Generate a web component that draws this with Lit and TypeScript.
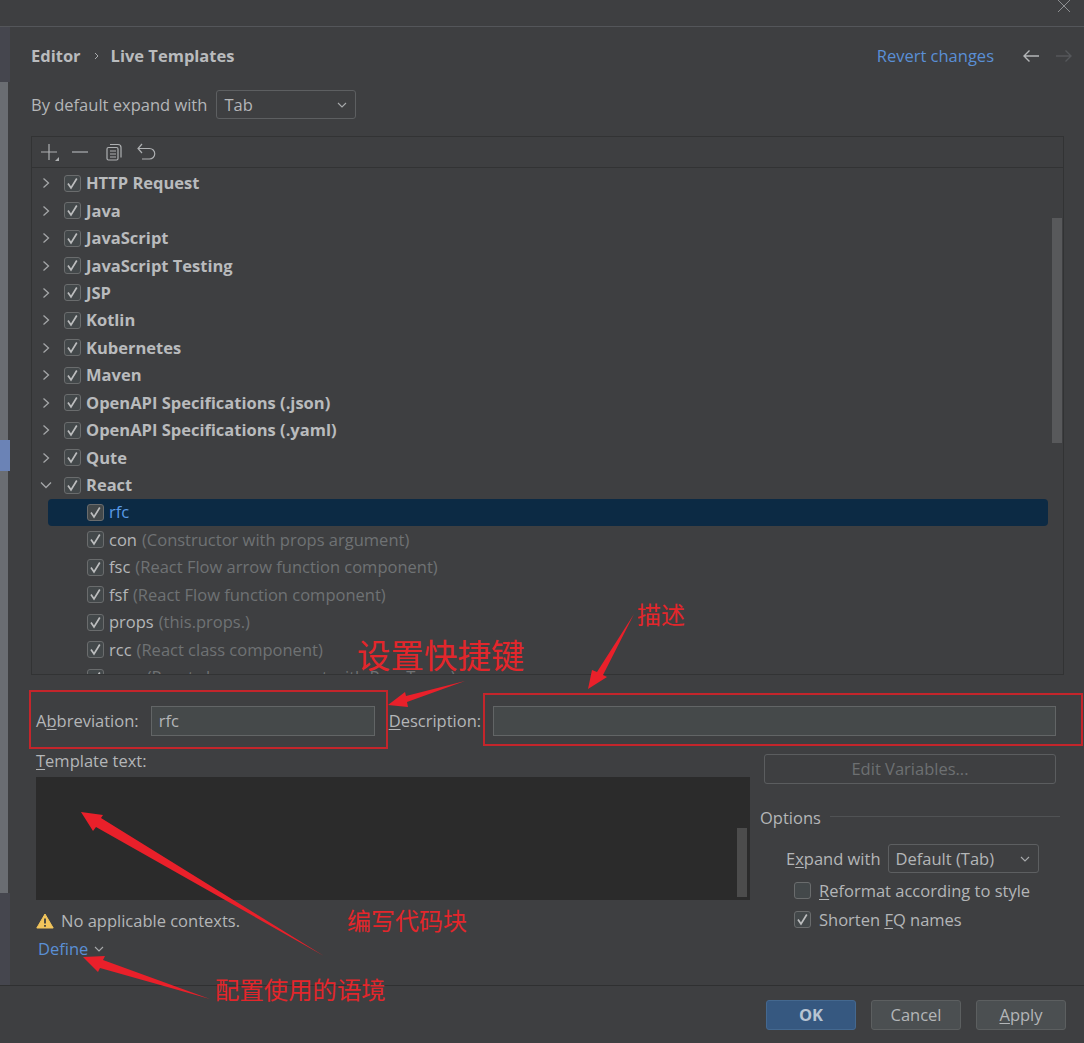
import { LitElement, html, css, svg } from "lit";
import { customElement } from "lit/decorators.js";

const groups = ["HTTP Request","Java","JavaScript","JavaScript Testing","JSP","Kotlin","Kubernetes","Maven","OpenAPI Specifications (.json)","OpenAPI Specifications (.yaml)","Qute"];
const children: [string,string][] = [
  ["con","(Constructor with props argument)"],
  ["fsc","(React Flow arrow function component)"],
  ["fsf","(React Flow function component)"],
  ["props","(this.props.)"],
  ["rcc","(React class component)"],
  ["rccp","(React class component with PropTypes)"],
];

const chevRight = html`<svg class="chev" viewBox="0 0 10 12"><path d="M2.5 1.5 L7.5 6 L2.5 10.5"/></svg>`;
const check = html`<svg viewBox="0 0 15 15"><path d="M3 7.5 L6 12 L11.8 2.5"/></svg>`;
const cb = (on = true) => html`<span class="cb">${on ? check : ""}</span>`;
const small = html`<svg class="sm" viewBox="0 0 10 6"><path d="M1 1 L5 5 L9 1"/></svg>`;

@customElement("app-root")
export class AppRoot extends LitElement {
  static styles = css`
    :host { display: block; width: 1084px; height: 1043px; position: relative; overflow: hidden;
      background: #3e3f41; color: #b4b6b8; font: 16.5px/22px "Open Sans", "Noto Sans", sans-serif; }
    * { box-sizing: border-box; }
    u { text-underline-offset: 2px; text-decoration-thickness: 1px; }
    .page { display: flex; flex-direction: column; height: 100%; }
    .title { height: 27px; flex: none; border-bottom: 1px solid #54565a; display: flex; justify-content: flex-end; padding-right: 13px; }
    .title svg { width: 14px; height: 13px; stroke: #8d8f91; stroke-width: 1; fill: none; }
    .body { flex: 1; display: flex; min-height: 0; }
    .strip { width: 10px; flex: none; display: flex; flex-direction: column; }
    .s1 { height: 55px; width: 10px; background: #45464e; }
    .s2 { height: 358px; width: 8px; background: #6a6d72; }
    .s3 { height: 31px; width: 10px; background: #6b83b6; }
    .s4 { height: 422px; width: 8px; background: #6a6d72; }
    .s5 { flex: 1; width: 10px; background: #45464e; }
    .main { flex: 1; min-width: 0; padding: 0 20px 0 21px; display: flex; flex-direction: column; }
    .head { height: 58px; flex: none; display: flex; align-items: center; }
    .crumb { font-weight: 700; color: #b9bbbd; display: flex; align-items: center; }
    .crumb svg { width: 6px; height: 10px; margin: 0 11px 0 13px; fill: none; stroke: #a8aaac; stroke-width: 1; }
    .revert { margin-left: auto; color: #5a8fd6; }
    .nav { display: flex; gap: 15px; margin-left: 28px; margin-right: -9px; }
    .nav svg { width: 18px; height: 14px; fill: none; stroke: #b4b6b8; stroke-width: 1.4; }
    .nav svg.off { stroke: #55575a; }
    .expand { margin-top: 5px; height: 29px; flex: none; display: flex; align-items: center; gap: 9px; }
    .select { height: 29px; border: 1px solid #5d5f61; border-radius: 3px; display: flex; align-items: center; padding: 0 8px 0 7px; justify-content: space-between; }
    .sm { width: 10px; height: 6px; fill: none; stroke: #a8aaac; stroke-width: 1.1; }
    .select.tab { width: 140px; }
    .tree { margin-top: 17px; width: 1033px; height: 539px; flex: none; border: 1px solid #323334; position: relative; overflow: hidden; }
    .tools { height: 31px; margin-bottom: 1.5px; border-bottom: 1px solid #323334; display: flex; align-items: center; }
    .tools svg { position: absolute; top: 4px; left: 7px; width: 120px; height: 20px; fill: none; stroke: #aeb0b2; stroke-width: 1.2; }
    .row { height: 27.45px; display: flex; align-items: center; font-weight: 700; color: #b9bbbd; padding-left: 9px; }
    .chev { width: 10px; height: 12px; fill: none; stroke: #a4a6a8; stroke-width: 1.3; margin-right: 13px; flex: none; }
    .row .chev.dn { width: 12px; height: 10px; margin-left: -1px; margin-right: 12px; }
    .cb { width: 17px; height: 17px; flex: none; border: 1px solid #6a6c6d; border-radius: 3px; background: #43484a; display: inline-flex; }
    .cb svg { width: 15px; height: 15px; fill: none; stroke: #bcbdbe; stroke-width: 1.7; }
    .row .name { margin-left: 5px; }
    .child { font-weight: 400; margin: 0 15px 0 16px; padding-left: 39px; color: #b4b6b8; border-radius: 4px; }
    .child .desc { color: #6f7274; margin-left: 5px; }
    .child.sel { background: #0c2a44; }
    .child.sel .name { color: #5a9be6; }
    .thumb { position: absolute; left: 1020px; top: 81px; width: 10px; height: 225px; background: #58595b; }
    .fields { height: 30px; margin-top: 31px; flex: none; display: flex; align-items: center; padding-left: 5px; }
    .input { height: 30px; background: #45494a; border: 1px solid #626566; padding: 0 7px; display: flex; align-items: center; }
    .i1 { width: 224px; margin: 0 14px 0 12px; }
    .i2 { width: 563px; margin-left: 12px; }
    .lower { flex: 1; display: grid; grid-template-columns: 728px 1fr; min-height: 0; }
    .left { padding: 14px 0 0 5px; display: flex; flex-direction: column; }
    .lbl { height: 22px; line-height: 22px; }
    .editor { width: 714px; height: 123px; margin-top: 5px; background: #2b2b2b; position: relative; flex: none; }
    .editor i { position: absolute; left: 701px; top: 51px; width: 10px; height: 69px; background: #4c4c4c; }
    .warn { display: flex; align-items: center; gap: 7px; margin-top: 10px; height: 22px; }
    .warn svg { width: 18px; height: 16px; flex: none; }
    .define { margin: 6px 0 0 2px; height: 22px; color: #5a8fd6; display: flex; align-items: center; gap: 6px; }
    .right { padding-top: 18px; display: flex; flex-direction: column; }
    .btn { height: 30px; border: 1px solid #5b5d5f; border-radius: 3px; display: flex; align-items: center; justify-content: center; }
    .edit { width: 292px; margin-left: 5px; color: #6d7072; }
    .opt { margin: 23px 0 0 1px; width: 300px; display: flex; align-items: center; gap: 9px; height: 22px; }
    .opt b { font-weight: 400; }
    .opt i { flex: 1; height: 1px; background: #505254; margin-top: -3px; }
    .ew { margin: 15px 0 0 27px; display: flex; align-items: center; gap: 7px; height: 29px; }
    .ew .select { width: 151px; }
    .chk { margin: 8px 0 0 35px; display: flex; align-items: center; gap: 8px; height: 19px; }
    .chk + .chk { margin-top: 10px; }
    .foot { height: 58px; flex: none; border-top: 1px solid #2f3031; display: flex; justify-content: flex-end; padding: 14px 18px 0 0; gap: 15px; }
    .foot .btn { width: 90px; background: #4b4f51; border-color: #5c5f60; color: #b4b6b8; }
    .foot .ok { background: #365880; border-color: #44688f; font-weight: 700; color: #b7c4d2; }
    .box { position: absolute; border: 2px solid #c4252b; }
    .b1 { left: 29px; top: 690px; width: 359px; height: 59px; }
    .b2 { left: 483px; top: 693px; width: 600px; height: 53px; }
    .note { position: absolute; color: #e3262b; font-family: "Noto Sans CJK SC", sans-serif; font-size: 24px; line-height: 32px; white-space: nowrap; }
    .n1 { left: 357px; top: 632px; font-size: 33.5px; line-height: 44px; }
    .n2 { left: 637px; top: 598px; }
    .n3 { left: 347px; top: 904px; }
    .n4 { left: 215px; top: 973px; font-size: 24.4px; }
    .arrows { position: absolute; inset: 0; width: 1084px; height: 1043px; fill: #e9202a; pointer-events: none; }
  `;

  render() {
    return html`<div class="page">
      <div class="title"><svg viewBox="0 0 14 13"><path d="M1 0 L13 12 M13 0 L1 12"/></svg></div>
      <div class="body">
        <div class="strip"><div class="s1"></div><div class="s2"></div><div class="s3"></div><div class="s4"></div><div class="s5"></div></div>
        <div class="main">
          <div class="head">
            <div class="crumb">Editor<svg viewBox="0 0 6 10"><path d="M1 2 L4 5 L1 8"/></svg>Live Templates</div>
            <span class="revert">Revert changes</span>
            <div class="nav">
              <svg viewBox="0 0 18 14"><path d="M17 7 H2 M7.5 1.5 L2 7 L7.5 12.5"/></svg>
              <svg class="off" viewBox="0 0 18 14"><path d="M1 7 H16 M10.5 1.5 L16 7 L10.5 12.5"/></svg>
            </div>
          </div>
          <div class="expand"><span>By default expand with</span><div class="select tab"><span>Tab</span>${small}</div></div>
          <div class="tree">
            <div class="tools"><svg viewBox="0 0 120 20">
              <path d="M2 11 H18 M10 3 V19"/><path d="M20 20 h-4 l4 -4 z" fill="#aeb0b2" stroke="none"/>
              <path d="M33 11 H49"/>
              <path d="M68 8 a1.5 1.5 0 0 1 1.5 -1.5 h8 a1.5 1.5 0 0 1 1.5 1.5 v9.5 a1.5 1.5 0 0 1 -1.5 1.5 h-8 a1.5 1.5 0 0 1 -1.5 -1.5 z M71 3.5 h8 a3 3 0 0 1 3 3 v10 M71 10 h6 M71 13 h6 M71 16 h6"/>
              <path d="M103 3 L99 7.5 L103 12 M99 7.5 H110.5 a5 5 0 0 1 0 10.5 H103"/>
            </svg></div>
            ${groups.map((g) => html`<div class="row">${chevRight}${cb()}<span class="name">${g}</span></div>`)}
            <div class="row"><svg class="chev dn" viewBox="0 0 12 10"><path d="M1 2.5 L6 7.5 L11 2.5"/></svg>${cb()}<span class="name">React</span></div>
            <div class="row child sel">${cb()}<span class="name">rfc</span></div>
            ${children.map(([n, d]) => html`<div class="row child">${cb()}<span class="name">${n}</span><span class="desc">${d}</span></div>`)}
            <div class="thumb"></div>
          </div>
          <div class="fields">
            <span>A<u>b</u>breviation:</span><div class="input i1">rfc</div>
            <span><u>D</u>escription:</span><div class="input i2"></div>
          </div>
          <div class="lower">
            <div class="left">
              <div class="lbl"><u>T</u>emplate text:</div>
              <div class="editor"><i></i></div>
              <div class="warn"><svg viewBox="0 0 18 16"><path d="M9 1 L17.2 15 H0.8 Z" fill="#f2c55c" stroke="#f2c55c" stroke-linejoin="round"/><path d="M9 5.5 V10.5 M9 12 V13.8" stroke="#3e3f41" stroke-width="1.8"/></svg><span>No applicable contexts.</span></div>
              <div class="define"><span>Define</span>${small}</div>
            </div>
            <div class="right">
              <div class="btn edit">Edit Variables...</div>
              <div class="opt"><b>Options</b><i></i></div>
              <div class="ew"><span>E<u>x</u>pand with</span><div class="select"><span>Default (Tab)</span>${small}</div></div>
              <div class="chk">${cb(false)}<span><u>R</u>eformat according to style</span></div>
              <div class="chk">${cb()}<span>Shorten <u>F</u>Q names</span></div>
            </div>
          </div>
        </div>
      </div>
      <div class="foot">
        <div class="btn ok">OK</div><div class="btn">Cancel</div><div class="btn"><span><u>A</u>pply</span></div>
      </div>
      <div class="box b1"></div><div class="box b2"></div>
      <div class="note n1">设置快捷键</div><div class="note n2">描述</div><div class="note n3">编写代码块</div><div class="note n4">配置使用的语境</div>
      <svg class="arrows" viewBox="0 0 1084 1043">
        ${svg`<polygon points="388,705 405,692 406,696 465,681 407,702 408,707"/>
        <polygon points="634,614 603,675 607,677 588,689 592,670 597,672"/>
        <polygon points="81,812 103,815 101,818 324,956 96,827 93,831"/>
        <polygon points="83,957 105,956 103,960 210,999 100,968 98,972"/>`}
      </svg>
    </div>`;
  }
}
